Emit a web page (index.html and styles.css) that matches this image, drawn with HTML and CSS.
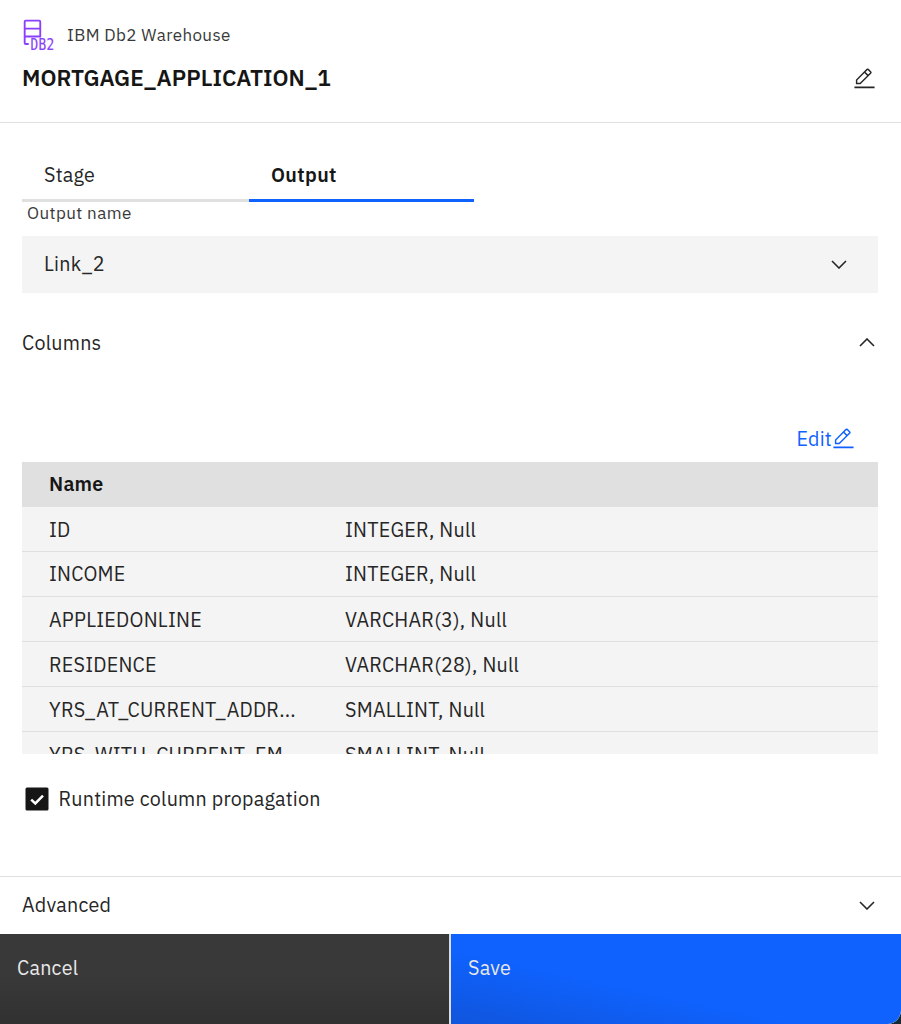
FILE: index.html
```html
<!DOCTYPE html>
<html lang="en">
<head>
<meta charset="utf-8">
<title>IBM Db2 Warehouse</title>
<link rel="stylesheet" href="styles.css">
</head>
<body>
<main class="panel">
  <header class="header">
    <div class="kind">
      <svg class="logo" viewBox="0 0 32 32" fill="none" stroke="#8a3ffc" stroke-width="1.8"><path d="M6.5 24.2H3.6Q2.6 24.2 2.6 23.2V2.6Q2.6 1.6 3.6 1.6H16.7Q17.7 1.6 17.7 2.6V17H2.6M2.6 9.4H17.7"/><text x="8.2" y="30.3" textLength="23.3" lengthAdjust="spacingAndGlyphs">DB2</text></svg>
      <span>IBM Db2 Warehouse</span>
    </div>
    <div class="title-row">
      <h1 class="title">MORTGAGE_APPLICATION_1</h1>
      <svg class="pencil" viewBox="0 0 32 32" fill="currentColor"><path d="M2 27H30V29.5H2zM25.4 9a2 2 0 0 0 0-2.8L21.8 2.6a2 2 0 0 0-2.8 0L4 17.6V24H10.4zM20.4 4 24 7.6 21 10.6 17.4 7zM6 22V18.4L16 8.4 19.6 12 9.6 22z"/></svg>
    </div>
  </header>
  <section class="content">
    <nav class="tabs"><a class="tab">Stage</a><a class="tab active">Output</a></nav>
    <label class="label">Output name</label>
    <div class="select"><span>Link_2</span><svg class="chevron" viewBox="0 0 16 9"><path d="M1 1 8 8 15 1"/></svg></div>
    <div class="section-head"><span>Columns</span><svg class="chevron" viewBox="0 0 16 9"><path d="M1 8 8 1 15 8"/></svg></div>
    <a class="edit"><span>Edit</span><svg class="pencil" viewBox="0 0 32 32" fill="currentColor"><path d="M2 27H30V29.5H2zM25.4 9a2 2 0 0 0 0-2.8L21.8 2.6a2 2 0 0 0-2.8 0L4 17.6V24H10.4zM20.4 4 24 7.6 21 10.6 17.4 7zM6 22V18.4L16 8.4 19.6 12 9.6 22z"/></svg></a>
    <div class="table">
      <div class="row head"><span>Name</span></div>
      <div class="row odd"><span>ID</span><span>INTEGER, Null</span></div>
      <div class="row"><span>INCOME</span><span>INTEGER, Null</span></div>
      <div class="row odd"><span>APPLIEDONLINE</span><span>VARCHAR(3), Null</span></div>
      <div class="row"><span>RESIDENCE</span><span>VARCHAR(28), Null</span></div>
      <div class="row"><span>YRS_AT_CURRENT_ADDR...</span><span>SMALLINT, Null</span></div>
      <div class="row"><span>YRS_WITH_CURRENT_EM...</span><span>SMALLINT, Null</span></div>
    </div>
    <div class="check"><svg class="box" viewBox="0 0 24 24"><rect x=".5" y=".5" width="23" height="23" rx="1.5" fill="#161616"/><path d="M6.2 12.6 10.3 16.5 18 8.7" fill="none" stroke="#fff" stroke-width="2.5"/></svg><span>Runtime column propagation</span></div>
  </section>
  <section class="advanced"><span>Advanced</span><svg class="chevron" viewBox="0 0 16 9"><path d="M1 1 8 8 15 1"/></svg></section>
  <footer class="footer"><button class="btn cancel">Cancel</button><button class="btn save">Save</button></footer>
</main>
</body>
</html>
```
FILE: styles.css
```css
* { box-sizing: border-box; }
body { margin: 0; background: #152a35; color: #262626; font: 19.7px/24px "IBM Plex Sans", Roboto, sans-serif; letter-spacing: .23px; }
svg { display: block; flex: none; }
span, h1 { white-space: nowrap; }
.panel { height: 1024px; background: #fff; display: flex; flex-direction: column; border-bottom-right-radius: 14px; overflow: hidden; }
.header { height: 123px; border-bottom: 1px solid #e0e0e0; padding: 18px 25px 0 22px; }
.kind { display: flex; align-items: center; gap: 12px; height: 34px; font-size: 17px; letter-spacing: .39px; color: #393939; }
.logo { width: 33px; height: 33px; overflow: visible; }
.logo text { font: 15px "DejaVu Sans Mono", monospace; fill: #8a3ffc; stroke: #8a3ffc; stroke-width: .2; }
.title-row { display: flex; justify-content: space-between; align-items: center; height: 52px; }
.title { margin: 0; font-size: 22.55px; font-weight: 600; letter-spacing: 0; color: #161616; }
.pencil { width: 23px; height: 23px; }
.content { padding: 25.5px 23px 0 22px; height: 753px; }
.tabs { display: grid; grid-template-columns: 227px 225px; height: 53.5px; }
.tab { padding: 14px 22px 0; border-bottom: 3px solid #e0e0e0; }
.active { font-weight: 600; letter-spacing: .35px; color: #161616; border-color: #0f62fe; }
.label { display: block; font-size: 17px; letter-spacing: .42px; line-height: 23px; color: #393939; height: 34px; padding-left: 5px; }
.select { display: flex; justify-content: space-between; align-items: center; height: 56.5px; padding: 0 31px 0 22px; background: #f4f4f4; }
.chevron { width: 16px; height: 9px; fill: none; stroke: #262626; stroke-width: 1.6; }
.section-head { display: flex; justify-content: space-between; align-items: center; height: 100px; padding-right: 3px; }
.edit { display: flex; justify-content: flex-end; align-items: center; height: 69.5px; padding: 23px 23px 0 0; color: #0f62fe; }
.table { height: 292px; overflow: hidden; background: #f4f4f4; }
.row { display: grid; grid-template-columns: 296px 1fr; align-items: center; height: 45.1px; padding: 1.5px 0 0 27px; border-bottom: 1px solid #e0e0e0; }
.odd { padding-top: 3px; }
.head { height: 44.5px; padding-top: 0; background: #e0e0e0; color: #161616; font-weight: 600; border: 0; }
.check { display: flex; align-items: center; gap: 9.5px; height: 89px; padding-left: 3px; }
.box { width: 24px; height: 24px; }
.advanced { display: flex; justify-content: space-between; align-items: center; height: 58px; padding: 0 26px 1px 22px; border-top: 1px solid #e0e0e0; }
.footer { display: grid; grid-template-columns: 449px 450.5px; gap: 1.5px; height: 90px; background: #ddd; }
.btn { border: 0; padding: 22px 17px; text-align: left; font: inherit; letter-spacing: inherit; color: #e8e8e8; display: flex; align-items: flex-start; }
.cancel { background: linear-gradient(#393939 45%, #313131); }
.save { padding-left: 17.5px; background: linear-gradient(192deg, #0f62fe 60%, #1055dc); }
```
